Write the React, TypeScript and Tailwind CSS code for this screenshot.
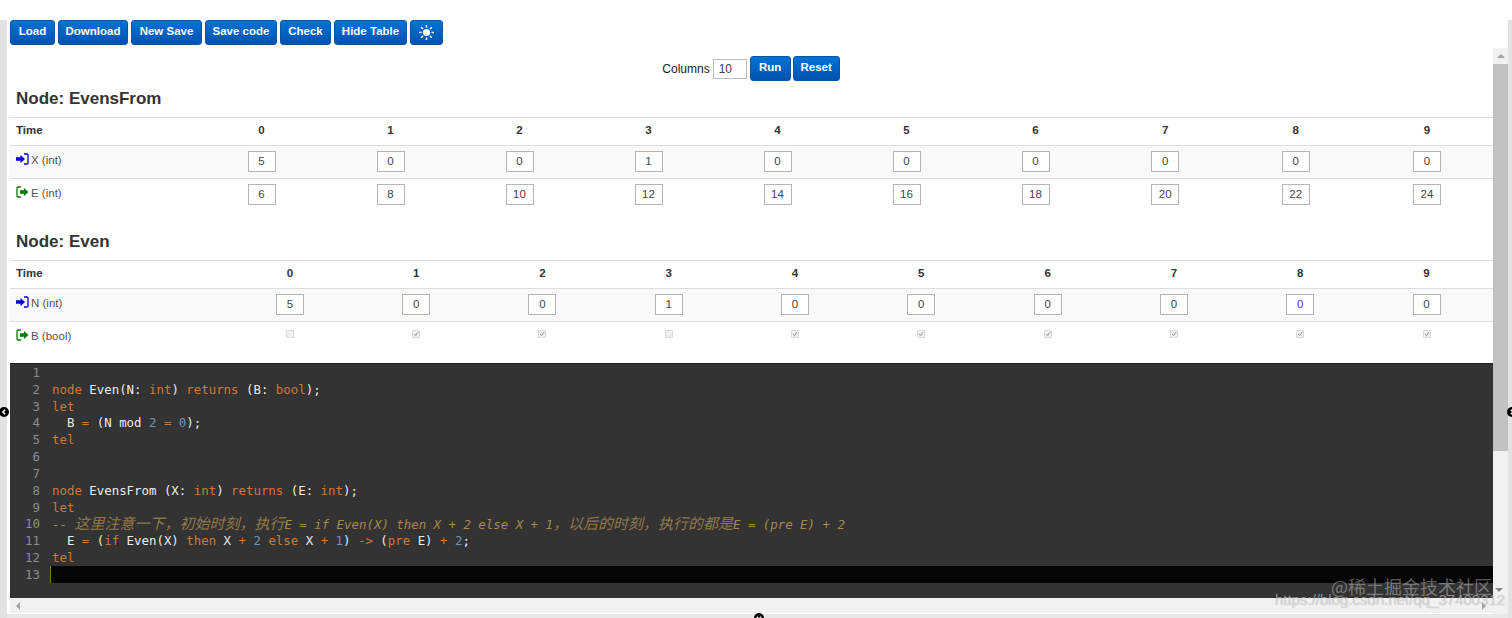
const btn =
  'h-[25px] rounded-[3px] border border-[#0a55a8] bg-gradient-to-b from-[#0073d6] to-[#0052b0] text-white text-[11.500px] font-bold flex items-center justify-center'

function LogInIcon({ color }: { color: string }) {
  return (
    <svg width="13" height="12" viewBox="0 0 13 12" className="shrink-0 -mt-[3px]">
      <path d="M0 4.300h4.500V2L9 6l-4.500 4V7.700H0z" fill={color} />
      <path d="M8 1h3a1 1 0 0 1 1 1v8a1 1 0 0 1-1 1H8" fill="none" stroke={color} strokeWidth="1.300" />
    </svg>
  )
}

function LogOutIcon({ color }: { color: string }) {
  return (
    <svg width="13" height="12" viewBox="0 0 13 12" className="shrink-0 -mt-[3px]">
      <path d="M4 4.300h4V2l4.500 4L8 10V7.700H4z" fill={color} />
      <path d="M5 1H2a1 1 0 0 0-1 1v8a1 1 0 0 0 1 1h3" fill="none" stroke={color} strokeWidth="1.300" />
    </svg>
  )
}

function SunIcon() {
  return (
    <svg width="15" height="15" viewBox="0 0 15 15">
      <circle cx="7.500" cy="7.500" r="3.600" fill="#fff" />
      <path
        d="M7.500 0v2.500M7.500 12.500V15M0 7.500h2.500M12.500 7.500H15M2.200 2.200l1.800 1.800M11 11l1.800 1.800M2.200 12.800L4 11M11 4l1.800-1.800"
        stroke="#fff"
        strokeWidth="1.500"
      />
    </svg>
  )
}

function Handle({ className, rotate }: { className: string; rotate: string }) {
  return (
    <div className={`absolute w-[10px] h-[10px] rounded-full bg-black flex items-center justify-center ${className}`}>
      <svg width="6" height="6" viewBox="0 0 6 6" className={rotate}>
        <path d="M4.200 .8L1.800 3l2.400 2.200" fill="none" stroke="#fff" strokeWidth="1.500" />
      </svg>
    </div>
  )
}

function ValueBox({ value }: { value: number }) {
  return (
    <div className="w-[28px] h-[21px] -mt-[1px] border border-[#b4b4b4] bg-white flex items-center justify-center text-[11.500px] text-[#444]">
      {value}
    </div>
  )
}

function Check({ on }: { on: boolean }) {
  return (
    <div className="w-[8px] h-[8px] -mt-[8px] rounded-[1px] border border-[#d8d8d8] bg-[#f0f0f0] flex items-center justify-center">
      {on && (
        <svg width="8" height="8" viewBox="0 0 8 8">
          <path d="M1.500 4l2 2L6.800 1.500" fill="none" stroke="#8a8a8a" strokeWidth="1.300" />
        </svg>
      )}
    </div>
  )
}

function NodeTable({ name, cols, rows }: { name: string; cols: string; rows: any[] }) {
  return (
    <div>
      <h2 className="h-[36px] pl-[6px] text-[17px] leading-[36px] font-bold text-[#333]">Node: {name}</h2>
      <div className={`grid ${cols} h-[28px] pb-[2px] items-center border-t border-[#ddd] text-[11.500px] font-bold text-[#333]`}>
        <div className="pl-[6px]">Time</div>
        {[0, 1, 2, 3, 4, 5, 6, 7, 8, 9].map(i => (
          <div key={i} className="text-center">{i}</div>
        ))}
      </div>
      {rows.map((row, r) => (
        <div
          key={row.label}
          className={`grid ${cols} h-[33px] items-center border-t border-[#ddd] ${r === 0 ? 'bg-[#f9f9f9]' : 'bg-white'}`}
        >
          <div className="pl-[6px] flex items-center gap-[2px] text-[11.500px] text-[#555] -mt-[3px]">
            {row.input ? <LogInIcon color="#0000e0" /> : <LogOutIcon color="#0a7a0a" />}
            <span>{row.label}</span>
          </div>
          {row.values.map((v: any, i: number) => (
            <div key={i} className="flex justify-center">
              {typeof v === 'number' ? <ValueBox value={v} /> : <Check on={v} />}
            </div>
          ))}
        </div>
      ))}
    </div>
  )
}

const K = 'text-[#cc7a38]'
const T = 'text-[#ececec]'
const N = 'text-[#6d94b5]'
const C = 'text-[#a8894c] italic'

const code: [string, string][][] = [
  [],
  [[K, 'node'], [T, ' Even(N: '], [K, 'int'], [T, ') '], [K, 'returns'], [T, ' (B: '], [K, 'bool'], [T, ');']],
  [[K, 'let']],
  [[T, '  B '], [K, '='], [T, ' (N mod '], [N, '2'], [K, ' = '], [N, '0'], [T, ');']],
  [[K, 'tel']],
  [],
  [],
  [[K, 'node'], [T, ' EvensFrom (X: '], [K, 'int'], [T, ') '], [K, 'returns'], [T, ' (E: '], [K, 'int'], [T, ');']],
  [[K, 'let']],
  [[C, '-- '], [C + ' cjk', '这里注意一下，初始时刻，执行'], [C, 'E = if Even(X) then X + 2 else X + 1'], [C + ' cjk', '，以后的时刻，执行的都是'], [C, 'E = (pre E) + 2']],
  [[T, '  E '], [K, '='], [T, ' ('], [K, 'if'], [T, ' Even(X) '], [K, 'then'], [T, ' X '], [K, '+'], [N, ' 2'], [K, ' else'], [T, ' X '], [K, '+'], [N, ' 1'], [T, ') '], [K, '->'], [T, ' ('], [K, 'pre'], [T, ' E) '], [K, '+'], [N, ' 2'], [T, ';']],
  [[K, 'tel']],
  [],
]

export default function App() {
  const buttons: [string, string][] = [
    ['Load', 'w-[45px]'],
    ['Download', 'w-[70px]'],
    ['New Save', 'w-[71px]'],
    ['Save code', 'w-[72px]'],
    ['Check', 'w-[51px]'],
    ['Hide Table', 'w-[73px]'],
  ]

  return (
    <div className="relative h-[618px] overflow-hidden bg-white pt-[20px] font-['Liberation_Sans',sans-serif]">
      <div className="h-[598px] border-l-[7px] border-r-[4px] border-[#e2e2e2] flex flex-col">
        <div className="h-[28px] pl-[3px] flex gap-[3px]">
          {buttons.map(([label, w]) => (
            <button key={label} className={`${btn} pb-[2px] ${w}`}>{label}</button>
          ))}
          <button className={`${btn} w-[33px]`}><SunIcon /></button>
        </div>

        <div className="h-[566px] flex">
          <div className="w-[1486px] pl-[3px] flex flex-col">
            <div className="h-[33px] flex items-center justify-center gap-[3px] pt-[7px] pr-[1px]">
              <span className="text-[12px] text-[#222] mt-[1px]">Columns</span>
              <div className="w-[34px] h-[20px] mt-[2px] border border-[#bbb] pl-[5px] text-[12px] leading-[18px] text-[#444]">10</div>
              <button className={`${btn} w-[41px]`}>Run</button>
              <button className={`${btn} w-[47px] -ml-[1px]`}>Reset</button>
            </div>
            <NodeTable
              name="EvensFrom"
              cols="grid-cols-[187px_repeat(7,129px)_130.500px_130.500px_1fr]"
              rows={[
                { label: 'X (int)', input: true, values: [5, 0, 0, 1, 0, 0, 0, 0, 0, 0] },
                { label: 'E (int)', input: false, values: [6, 8, 10, 12, 14, 16, 18, 20, 22, 24] },
              ]}
            />
            <div className="h-[13px]" />
            <NodeTable
              name="Even"
              cols="grid-cols-[216.700px_repeat(10,126.300px)]"
              rows={[
                { label: 'N (int)', input: true, values: [5, 0, 0, 1, 0, 0, 0, 0, 0, 0] },
                { label: 'B (bool)', input: false, values: [false, true, true, false, true, true, true, true, true, true] },
              ]}
            />
            <div className="h-[9px]" />

            <div className="h-[235px] pt-[1px] bg-[#333] flex border-t border-[#222] font-['DejaVu_Sans_Mono',monospace] text-[12.400px] leading-[16.830px] [&_.cjk]:font-['Noto_Sans_CJK_SC'] [&_.cjk]:text-[15px] [&_.cjk]:opacity-80">
              <div className="w-[40px] pr-[10px] text-right text-[#8c8c8c]">
                {code.map((_, i) => (
                  <div key={i} className="h-[16.830px]">{i + 1}</div>
                ))}
              </div>
              <div className="flex-1">
                {code.map((line, i) => (
                  <div
                    key={i}
                    className={`h-[16.830px] pl-[2px] whitespace-pre ${i === 12 ? '-mt-[1px] bg-[#050505] border-l border-[#7a7a20]' : ''} ${i === 9 ? '-translate-y-[1.500px]' : ''}`}
                  >
                    {line.map(([cls, text], j) => (
                      <span key={j} className={cls}>{text}</span>
                    ))}
                  </div>
                ))}
              </div>
            </div>

            <div className="h-[15px] bg-[#f1f1f1] flex items-center justify-between pl-[6px] pr-[7px]">
              <div className="w-0 h-0 border-y-[4px] border-y-transparent border-r-[4px] border-r-[#a3a3a3]" />
              <div className="w-0 h-0 border-y-[4px] border-y-transparent border-l-[4px] border-l-[#a3a3a3]" />
            </div>
          </div>

          <div className="w-[15px] bg-[#f1f1f1] flex flex-col">
            <div className="h-[16px] flex items-center justify-center">
              <div className="w-0 h-0 border-x-[4px] border-x-transparent border-b-[4px] border-b-[#a3a3a3]" />
            </div>
            <div className="h-[387px] bg-[#c1c1c1]" />
          </div>
        </div>

        <div className="flex-1 bg-[#e8e8e8]" />
      </div>

      <div className="absolute left-[1495px] top-[588px] w-0 h-0 border-x-[4px] border-x-transparent border-t-[4px] border-t-[#8a8a8a]" />

      <Handle className="left-[-1px] top-[407px]" rotate="" />
      <Handle className="left-[1507px] top-[407px]" rotate="rotate-180" />
      <Handle className="left-[754px] top-[613px]" rotate="-rotate-90" />

      <div className="absolute left-[1331px] top-[575px] text-[18px] leading-[22px] text-white/35 font-['Noto_Sans_CJK_SC',sans-serif] whitespace-nowrap">
        @稀土掘金技术社区
      </div>
      <div className="absolute left-[1275px] top-[592px] text-[15px] leading-[16px] text-white/50 [text-shadow:0_0_1px_rgba(0,0,0,0.35)] whitespace-nowrap">
        https://blog.csdn.net/qq_37400312
      </div>
    </div>
  )
}
